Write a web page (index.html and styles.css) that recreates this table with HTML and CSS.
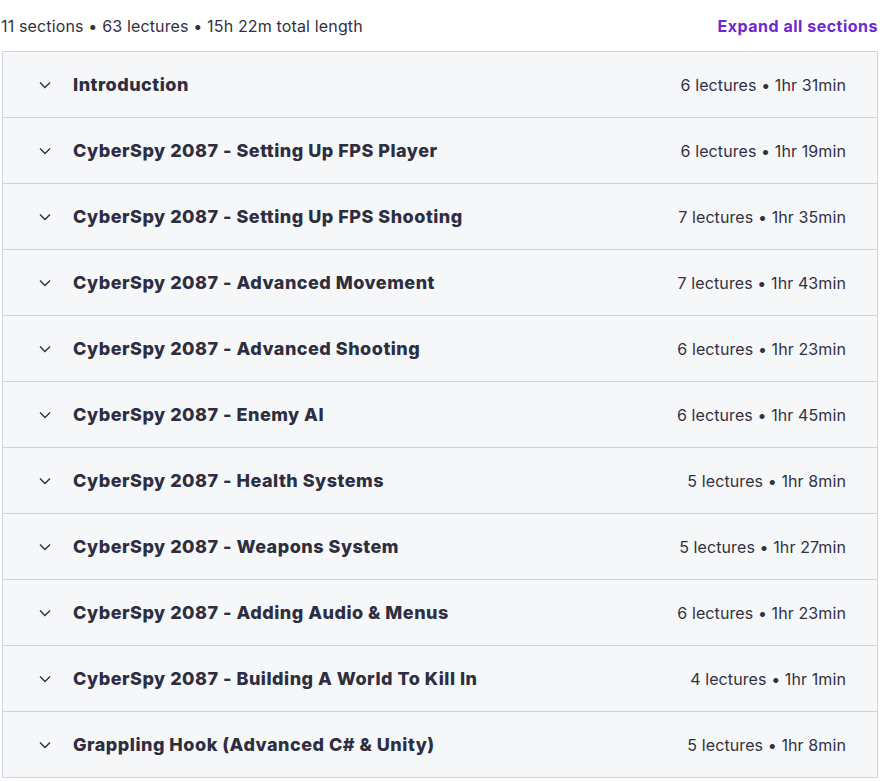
FILE: index.html
```html
<!DOCTYPE html>
<html>
<head>
<meta charset="utf-8">
<link rel="stylesheet" href="styles.css">
</head>
<body>
<div class="curriculum">
  <div class="header">
    <span class="summary">11 sections • 63 lectures • 15h 22m total length</span>
    <span class="expand">Expand all sections</span>
  </div>
  <div class="panel">
    <div class="row"><svg class="chev" viewBox="0 0 12 8"><path d="M1 1.5 L6 6.5 L11 1.5"/></svg><span class="title">Introduction</span><span class="meta">6 lectures • 1hr 31min</span></div>
    <div class="row"><svg class="chev" viewBox="0 0 12 8"><path d="M1 1.5 L6 6.5 L11 1.5"/></svg><span class="title">CyberSpy 2087 - Setting Up FPS Player</span><span class="meta">6 lectures • 1hr 19min</span></div>
    <div class="row"><svg class="chev" viewBox="0 0 12 8"><path d="M1 1.5 L6 6.5 L11 1.5"/></svg><span class="title">CyberSpy 2087 - Setting Up FPS Shooting</span><span class="meta">7 lectures • 1hr 35min</span></div>
    <div class="row"><svg class="chev" viewBox="0 0 12 8"><path d="M1 1.5 L6 6.5 L11 1.5"/></svg><span class="title">CyberSpy 2087 - Advanced Movement</span><span class="meta">7 lectures • 1hr 43min</span></div>
    <div class="row"><svg class="chev" viewBox="0 0 12 8"><path d="M1 1.5 L6 6.5 L11 1.5"/></svg><span class="title">CyberSpy 2087 - Advanced Shooting</span><span class="meta">6 lectures • 1hr 23min</span></div>
    <div class="row"><svg class="chev" viewBox="0 0 12 8"><path d="M1 1.5 L6 6.5 L11 1.5"/></svg><span class="title">CyberSpy 2087 - Enemy AI</span><span class="meta">6 lectures • 1hr 45min</span></div>
    <div class="row"><svg class="chev" viewBox="0 0 12 8"><path d="M1 1.5 L6 6.5 L11 1.5"/></svg><span class="title">CyberSpy 2087 - Health Systems</span><span class="meta">5 lectures • 1hr 8min</span></div>
    <div class="row"><svg class="chev" viewBox="0 0 12 8"><path d="M1 1.5 L6 6.5 L11 1.5"/></svg><span class="title">CyberSpy 2087 - Weapons System</span><span class="meta">5 lectures • 1hr 27min</span></div>
    <div class="row"><svg class="chev" viewBox="0 0 12 8"><path d="M1 1.5 L6 6.5 L11 1.5"/></svg><span class="title">CyberSpy 2087 - Adding Audio &amp; Menus</span><span class="meta">6 lectures • 1hr 23min</span></div>
    <div class="row"><svg class="chev" viewBox="0 0 12 8"><path d="M1 1.5 L6 6.5 L11 1.5"/></svg><span class="title">CyberSpy 2087 - Building A World To Kill In</span><span class="meta">4 lectures • 1hr 1min</span></div>
    <div class="row"><svg class="chev" viewBox="0 0 12 8"><path d="M1 1.5 L6 6.5 L11 1.5"/></svg><span class="title">Grappling Hook (Advanced C# &amp; Unity)</span><span class="meta">5 lectures • 1hr 8min</span></div>
  </div>
</div>
</body>
</html>
```
FILE: styles.css
```css
html, body {
  margin: 0;
  padding: 0;
  background: #ffffff;
}
body {
  font-family: Inter, "Noto Sans", sans-serif;
  color: #2d2f31;
}
.curriculum {
  width: 878px;
  padding-top: 14px;
}
.header {
  display: flex;
  justify-content: space-between;
  align-items: center;
  height: 24px;
  padding-left: 1px;
  margin-bottom: 13px;
}
.summary {
  font-size: 16px;
  letter-spacing: 0.15px;
  color: #303141;
}
.expand {
  font-size: 16px;
  font-weight: 700;
  color: #6d28d2;
  letter-spacing: 0.5px;
}
.panel {
  margin-left: 2px;
  border: 1px solid #d1d2e0;
}
.row {
  display: flex;
  align-items: center;
  height: 65px;
  background: #f6f7f9;
  border-bottom: 1px solid #d1d2e0;
  padding: 0 31px 0 36px;
}
.row:last-child {
  border-bottom: none;
}
.chev {
  width: 12px;
  height: 8px;
  flex: none;
  fill: none;
  stroke: #303141;
  stroke-width: 1.4;
  margin-right: 22px;
}
.title {
  flex: 1;
  font-size: 18px;
  font-weight: 800;
  letter-spacing: 0.5px;
  color: #2d2e3f;
}
.meta {
  font-size: 16px;
  letter-spacing: 0.1px;
  color: #303141;
}
```
